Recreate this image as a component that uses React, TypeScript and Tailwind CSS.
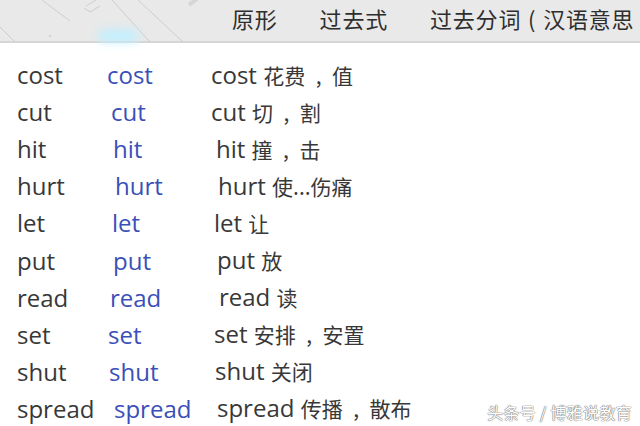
const rows = [
  { w: "cost", a: "w-[90px]", b: "w-[104px]", cn: "花费\u2002,\u2002值" },
  { w: "cut", a: "w-[94px]", b: "w-[100px]", cn: "切\u2002,\u2002割" },
  { w: "hit", a: "w-[96px]", b: "w-[103px]", cn: "撞\u2002,\u2002击" },
  { w: "hurt", a: "w-[98px]", b: "w-[103px]", cn: "使...伤痛" },
  { w: "let", a: "w-[95px]", b: "w-[102px]", cn: "让" },
  { w: "put", a: "w-[96px]", b: "w-[104px]", cn: "放" },
  { w: "read", a: "w-[93px]", b: "w-[109px]", cn: "读" },
  { w: "set", a: "w-[91px]", b: "w-[106px]", cn: "安排\u2002,\u2002安置" },
  { w: "shut", a: "w-[92px]", b: "w-[106px]", cn: "关闭" },
  { w: "spread", a: "w-[97px]", b: "w-[103px]", cn: "传播\u2002,\u2002散布" },
];

const HeaderDecor = () => (
  <svg className="absolute left-0 top-0" width="220" height="42" viewBox="0 0 220 42">
    <g stroke="#cdcdcd" strokeWidth="1" fill="none">
      <line x1="0" y1="27" x2="15" y2="42" />
      <line x1="42" y1="0" x2="70" y2="21" />
      <line x1="112" y1="0" x2="150" y2="42" />
      <line x1="138" y1="0" x2="183" y2="42" />
      <path d="M86 6 L96 0 M84 8 L90 12 L100 6" />
    </g>
    <circle cx="50" cy="36" r="1" fill="#c8c8c8" />
    <g fill="#d6d6d6">
      <rect x="188" y="0" width="10" height="4" transform="rotate(-35 193 2)" />
    </g>
  </svg>
);

export default function App() {
  return (
    <div className="relative h-[426px] w-[640px] overflow-hidden bg-white font-['Open_Sans','Noto_Sans_CJK_SC',sans-serif]">
      <div className="relative h-[43px] border-b-2 border-[#d6d6d6] bg-[#e9e9e9]">
        <HeaderDecor />
        <div className="absolute left-[98px] top-[30px] h-[12px] w-[40px] rounded-full bg-[#bfefff] blur-[5px]" />
        <div className="relative flex h-full items-start pt-[3px] font-['Noto_Sans_CJK_SC',sans-serif] text-[22px] leading-[30px] tracking-[0.8px] whitespace-nowrap text-[#2e2e2e]">
          <span className="ml-[232px]">原形</span>
          <span className="ml-[42px]">过去式</span>
          <span className="ml-[42px]">过去分词</span>
          <span className="w-[22px] text-center">(</span>
          <span>汉语意思</span>
        </div>
      </div>

      <div className="flex flex-col pt-[13px] pl-[17px] text-[24px] text-[#383838]">
        {rows.map((r) => (
          <div key={r.w} className="flex h-[37.1px] items-center whitespace-nowrap leading-[37px]">
            <span className={r.a}>{r.w}</span>
            <span className={`${r.b} text-[#3a50b8]`}>{r.w}</span>
            <span>
              {r.w} <span className="font-['Noto_Sans_CJK_SC',sans-serif] text-[21px]">{r.cn}</span>
            </span>
          </div>
        ))}
      </div>

      <div className="absolute right-[8px] bottom-[3px] font-['Noto_Sans_CJK_SC',sans-serif] text-[16px] leading-[22px] tracking-[0.3px] text-white [text-shadow:0_0_1px_#777,0_0_1px_#777,0_0_1px_#777]">
        头条号 / 博雅说教育
      </div>
    </div>
  );
}
